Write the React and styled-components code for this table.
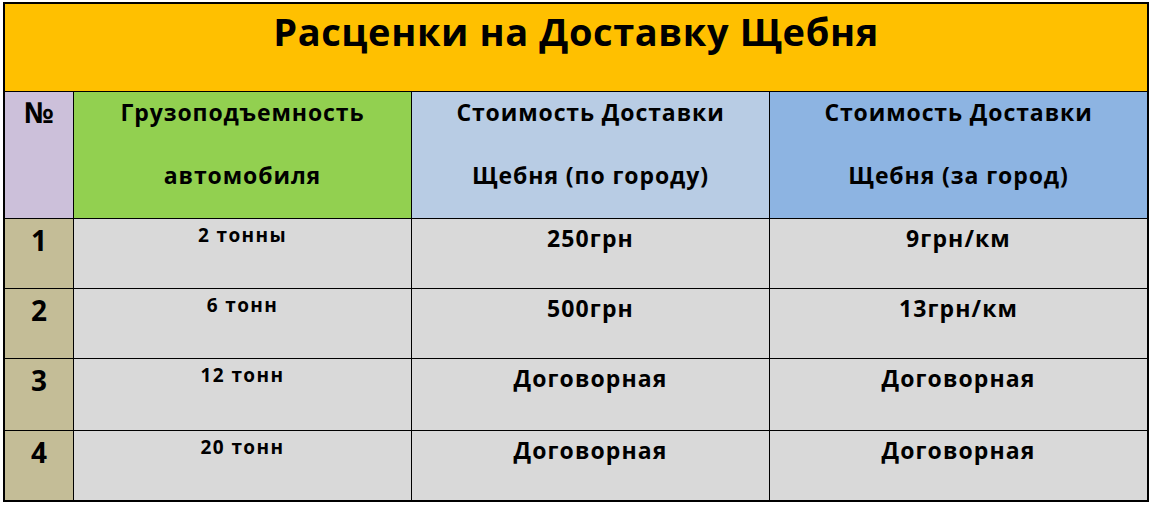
import React from 'react'
import styled, { createGlobalStyle } from 'styled-components'

const GlobalStyle = createGlobalStyle`
    body {
        margin: 2px 0 0 3px;
        background: #ffffff;
        font-family: "Open Sans", "Noto Sans", sans-serif;
        color: #000000;
    }
`

const Table = styled.div`
    width: 1146px;
    box-sizing: border-box;
    border: 2px solid #000;
    background: #000;
    display: grid;
    grid-template-columns: 68px 337px 357px 1fr;
    grid-template-rows: 87px 126px 69px 69px 71px 69px;
    gap: 1px;
`

const Title = styled.div`
    grid-column: 1 / -1;
    background: #ffc000;
    text-align: center;
    font-size: 38px;
    font-weight: 700;
    letter-spacing: 0.6px;
    line-height: 44px;
    padding-top: 5px;
`

const HeadCell = styled.div`
    background: ${p => p.bg};
    text-align: center;
    font-size: ${p => (p.big ? '29px' : '23px')};
    font-weight: 700;
    letter-spacing: ${p => (p.big ? '0' : '0.9px')};
    padding-top: 5px;
    display: flex;
    flex-direction: column;
    gap: 33px;
    span {
        display: block;
        line-height: 30px;
    }
`

const NumCell = styled.div`
    background: #c4bd97;
    text-align: center;
    font-size: 28px;
    font-weight: 700;
    line-height: 30px;
    padding-top: 6px;
`

const Cell = styled.div`
    background: #d9d9d9;
    text-align: center;
    font-size: ${p => (p.small ? '19px' : '23px')};
    font-weight: 700;
    letter-spacing: ${p => (p.small ? '1.4px' : '1.1px')};
    line-height: 30px;
    padding-top: ${p => (p.small ? '1px' : '4px')};
`

const rows = [
    { n: '1', load: '2 тонны', city: '250грн', out: '9грн/км' },
    { n: '2', load: '6 тонн', city: '500грн', out: '13грн/км' },
    { n: '3', load: '12 тонн', city: 'Договорная', out: 'Договорная' },
    { n: '4', load: '20 тонн', city: 'Договорная', out: 'Договорная' },
]

export default function App() {
    return (
        <>
            <GlobalStyle />
            <Table>
                <Title>Расценки на Доставку Щебня</Title>
                <HeadCell bg="#ccc0da" big><span>№</span></HeadCell>
                <HeadCell bg="#92d050">
                    <span>Грузоподъемность</span>
                    <span>автомобиля</span>
                </HeadCell>
                <HeadCell bg="#b8cce4">
                    <span>Стоимость Доставки</span>
                    <span>Щебня (по городу)</span>
                </HeadCell>
                <HeadCell bg="#8db4e2">
                    <span>Стоимость Доставки</span>
                    <span>Щебня (за город)</span>
                </HeadCell>
                {rows.map(r => (
                    <React.Fragment key={r.n}>
                        <NumCell>{r.n}</NumCell>
                        <Cell small>{r.load}</Cell>
                        <Cell>{r.city}</Cell>
                        <Cell>{r.out}</Cell>
                    </React.Fragment>
                ))}
            </Table>
        </>
    )
}
